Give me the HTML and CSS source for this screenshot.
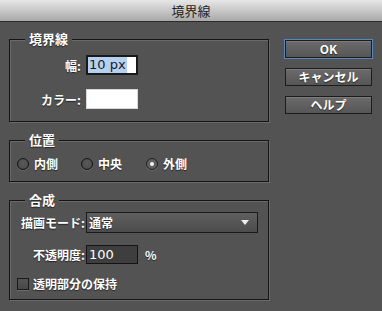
FILE: index.html
```html
<!DOCTYPE html>
<html lang="ja">
<head>
<meta charset="utf-8">
<title>境界線</title>
<link rel="stylesheet" href="styles.css">
</head>
<body>
<div class="dialog">
  <div class="titlebar">境界線</div>
  <div class="content">
    <div class="left">
      <div class="group g1">
        <div class="legend">境界線</div>
        <div class="formgrid">
          <span class="lbl">幅:</span>
          <div class="textbox"><span class="sel">10 px</span></div>
          <span class="lbl">カラー:</span>
          <div class="swatch"></div>
        </div>
      </div>
      <div class="group g2">
        <div class="legend">位置</div>
        <div class="radios">
          <label class="radio r1"><span class="circle"></span>内側</label>
          <label class="radio r2"><span class="circle"></span>中央</label>
          <label class="radio r3"><span class="circle on"></span>外側</label>
        </div>
      </div>
      <div class="group g3">
        <div class="legend">合成</div>
        <div class="formgrid2">
          <span class="lbl">描画モード:</span>
          <div class="select"><span>通常</span><span class="arrow"></span></div>
          <span class="lbl">不透明度:</span>
          <div class="numrow"><div class="darkbox">100</div><span class="pct">%</span></div>
        </div>
        <label class="check"><span class="box"></span>透明部分の保持</label>
      </div>
    </div>
    <div class="buttons">
      <div class="btn default">OK</div>
      <div class="btn">キャンセル</div>
      <div class="btn">ヘルプ</div>
    </div>
  </div>
</div>
</body>
</html>
```
FILE: styles.css
```css
html, body {
  margin: 0;
  padding: 0;
  background: #535353;
}
.dialog {
  width: 382px;
  height: 311px;
  background: #535353;
  font-family: "Noto Sans CJK JP", "Noto Sans", sans-serif;
  color: #fff;
  overflow: hidden;
}
.titlebar {
  height: 21px;
  line-height: 21px;
  text-align: center;
  font-size: 13px;
  color: #1e1e1e;
  background: linear-gradient(#e6e6e6, #a9a9a9);
  border-bottom: 1px solid #2b2b2b;
}
.content {
  display: flex;
  padding: 17px 0 0 9px;
}
.left {
  width: 260px;
  display: flex;
  flex-direction: column;
  gap: 18px;
}
.group {
  position: relative;
  border: 1px solid #151515;
  box-shadow: inset 1px 1px 0 #6a6a6a, 1px 1px 0 #6a6a6a;
  box-sizing: border-box;
}
.legend {
  position: absolute;
  top: -10px;
  left: 15px;
  padding: 0 4px;
  background: #535353;
  font-size: 13px;
  font-weight: bold;
  line-height: 18px;
  text-shadow: 0 1px 1px rgba(0,0,0,.6);
}
.lbl, .radio, .check {
  font-size: 12px;
  font-weight: bold;
  text-shadow: 0 1px 1px rgba(0,0,0,.6);
}
.g1 { height: 83px; padding: 15px 0 0 0; }
.formgrid {
  display: grid;
  grid-template-columns: 76px 52px;
  row-gap: 14px;
  align-items: center;
}
.formgrid .lbl { text-align: right; padding-right: 5px; }
.textbox {
  height: 20px;
  box-sizing: border-box;
  background: #fff;
  border: 2px solid #1a1a1a;
  padding: 0 0 0 0;
  display: flex;
  align-items: stretch;
}
.sel {
  background: #b6d0f2;
  color: #1a1a1a;
  font-family: "DejaVu Sans", sans-serif;
  font-size: 13px;
  line-height: 16px;
  padding: 0 1px 0 1px;
}
.swatch {
  height: 20px;
  background: #fff;
  box-sizing: border-box;
  border: 1px solid #d8d8d8;
}
.g2 { height: 42px; padding-top: 17px; }
.radios {
  display: flex;
  padding-left: 7px;
}
.radio {
  display: flex;
  align-items: center;
  gap: 5px;
  line-height: 12px;
}
.r1 { width: 64px; }
.r2 { width: 65px; }
.circle {
  width: 12px;
  height: 12px;
  box-sizing: border-box;
  border-radius: 50%;
  border: 1px solid #141414;
  background: radial-gradient(circle at 50% 40%, #5a5a5a, #474747);
  box-shadow: 0 1px 0 #6a6a6a;
  display: flex;
  align-items: center;
  justify-content: center;
}
.circle.on {
  border-color: #1e1e1e;
  background: #606060;
}
.circle.on::after {
  content: "";
  width: 4px;
  height: 4px;
  border-radius: 50%;
  background: #f4f4f4;
}
.g3 { height: 100px; padding-top: 11px; }
.formgrid2 {
  display: grid;
  grid-template-columns: 76px 172px;
  row-gap: 12px;
  align-items: center;
}
.formgrid2 .lbl { text-align: right; padding-right: 1px; }
.select {
  height: 21px;
  box-sizing: border-box;
  border: 1px solid #1a1a1a;
  background: linear-gradient(#5f5f5f, #4c4c4c);
  display: flex;
  align-items: center;
  justify-content: space-between;
  padding: 0 8px 0 2px;
  font-size: 12px;
  font-weight: bold;
  text-shadow: 0 1px 1px rgba(0,0,0,.6);
}
.arrow {
  width: 0;
  height: 0;
  border-left: 4px solid transparent;
  border-right: 4px solid transparent;
  border-top: 5px solid #eee;
}
.numrow {
  display: flex;
  align-items: center;
}
.darkbox {
  width: 52px;
  height: 19px;
  box-sizing: border-box;
  border: 1px solid #141414;
  background: #3e3e3e;
  font-family: "DejaVu Sans", sans-serif;
  font-size: 13px;
  line-height: 17px;
  padding-left: 2px;
  color: #fff;
}
.pct {
  margin-left: 7px;
  font-size: 12px;
  font-weight: bold;
  text-shadow: 0 1px 1px rgba(0,0,0,.6);
}
.check {
  display: flex;
  align-items: center;
  gap: 4px;
  margin: 14px 0 0 7px;
  line-height: 12px;
}
.box {
  width: 12px;
  height: 12px;
  box-sizing: border-box;
  border: 1px solid #1a1a1a;
  background: linear-gradient(#555, #484848);
  box-shadow: 0 1px 0 #6a6a6a;
}
.buttons {
  display: flex;
  flex-direction: column;
  gap: 10px;
  margin-left: 16px;
  padding-top: 1px;
}
.btn {
  width: 87px;
  height: 18px;
  box-sizing: border-box;
  border: 1px solid #1c1c1c;
  background: linear-gradient(#6b6b6b, #565656);
  box-shadow: inset 0 1px 0 #7c7c7c;
  text-align: center;
  font-size: 12px;
  font-weight: bold;
  line-height: 16px;
  text-shadow: 0 1px 1px rgba(0,0,0,.6);
}
.btn.default {
  outline: 1px solid #5a86c0;
  outline-offset: 0;
}
```
